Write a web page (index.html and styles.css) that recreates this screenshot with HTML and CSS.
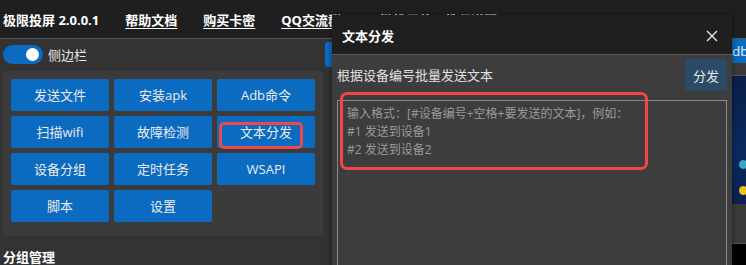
FILE: index.html
```html
<!DOCTYPE html>
<html lang="zh-CN">
<head>
<meta charset="utf-8">
<title>极限投屏</title>
<link rel="stylesheet" href="styles.css">
</head>
<body>
<div class="app">
  <header class="topbar">
    <span class="brand">极限投屏 2.0.0.1</span>
    <a class="nav">帮助文档</a>
    <a class="nav">购买卡密</a>
    <a class="nav">QQ交流群</a>
    <a class="nav">一键投屏使用教程说明</a>
  </header>
  <div class="main">
    <aside class="sidebar">
      <div class="switch-row">
        <span class="switch"><span class="knob"></span></span>
        <span class="switch-label">侧边栏</span>
      </div>
      <div class="panel">
        <div class="grid">
          <button class="btn">发送文件</button>
          <button class="btn">安装apk</button>
          <button class="btn">Adb命令</button>
          <button class="btn">扫描wifi</button>
          <button class="btn">故障检测</button>
          <button class="btn btn-marked">文本分发<span class="mark mark-btn"></span></button>
          <button class="btn">设备分组</button>
          <button class="btn">定时任务</button>
          <button class="btn">WSAPI</button>
          <button class="btn">脚本</button>
          <button class="btn">设置</button>
        </div>
      </div>
      <div class="section-title">分组管理</div>
    </aside>
    <section class="content">
      <div class="tool-btn"></div>
      <div class="device">
        <div class="dev-btn">Adb</div>
        <div class="dev-bar"></div>
        <div class="dev-screen">
          <span class="app-icon teal"></span>
          <span class="app-icon yellow"></span>
        </div>
        <div class="dev-foot"></div>
        <div class="dev-black"></div>
      </div>
    </section>
  </div>

  <div class="modal">
    <div class="modal-head">
      <span class="modal-title">文本分发</span>
      <svg class="close" width="12" height="12" viewBox="0 0 12 12"><path d="M1 1L11 11M11 1L1 11" stroke="#e6e6e6" stroke-width="1.4" fill="none"/></svg>
    </div>
    <div class="modal-body">
      <div class="row">
        <span class="label">根据设备编号批量发送文本</span>
        <button class="send">分发</button>
      </div>
      <textarea class="input" placeholder="输入格式：[#设备编号+空格+要发送的文本]，例如：&#10;#1 发送到设备1&#10;#2 发送到设备2"></textarea>
    </div>
    <span class="mark mark-area"></span>
  </div>
</div>
</body>
</html>
```

FILE: styles.css
```css
* { box-sizing: border-box; }
html, body { margin: 0; padding: 0; }
body {
  width: 746px;
  height: 265px;
  overflow: hidden;
  background: #333333;
  font-family: "Open Sans", "Noto Sans CJK SC", sans-serif;
  font-size: 13px;
  color: #e8e8e8;
}
.app { position: relative; width: 746px; height: 265px; overflow: hidden; }

.topbar {
  height: 39px;
  background: #1f1f1f;
  border-bottom: 1px solid #555555;
  display: flex;
  align-items: center;
  padding: 0 0 0 3px;
  gap: 26px;
  white-space: nowrap;
}
.brand { font-weight: 700; color: #ffffff; font-size: 13px; line-height: 18px; margin-top: 2px; }
.nav { font-weight: 700; color: #ffffff; text-decoration: underline; text-underline-offset: 3px; font-size: 13px; line-height: 18px; margin-top: 2px; }

.main { display: flex; }
.sidebar { width: 325px; flex: none; padding-left: 3px; }
.switch-row { display: flex; align-items: center; gap: 5px; margin-top: 6px; height: 19px; }
.switch {
  width: 40px; height: 19px; border-radius: 10px; background: #0b6bc0;
  display: flex; align-items: center; justify-content: flex-end; padding-right: 4px;
}
.knob { width: 13px; height: 13px; border-radius: 50%; background: #ffffff; }
.switch-label { color: #e6e6e6; font-size: 13px; line-height: 18px; }

.panel {
  margin-top: 7px;
  width: 320px;
  background: #3b3b3b;
  border-radius: 4px;
  padding: 8px 8px 14px 8px;
}
.grid { display: grid; grid-template-columns: repeat(3, 98px); column-gap: 5px; row-gap: 5px; }
.btn {
  position: relative;
  height: 32px;
  border: none;
  border-radius: 2px;
  background: #0b6bc0;
  color: #ececec;
  font-family: "Open Sans", "Noto Sans CJK SC", sans-serif;
  font-size: 13px;
  line-height: 18px;
  padding: 0;
}
.mark { position: absolute; border: 3px solid #ee4848; display: block; }
.mark-btn { left: 2px; top: 6px; width: 84px; height: 27px; border-radius: 5px; }

.section-title { margin-top: 12px; font-weight: 700; color: #ffffff; font-size: 13px; line-height: 18px; }

.content { display: flex; align-items: flex-start; flex: 1; }
.tool-btn { width: 60px; height: 25px; margin-top: 3px; background: #0b6bc0; border-radius: 3px; flex: none; }
.device { margin-left: 315px; width: 120px; flex: none; display: flex; flex-direction: column; }
.dev-btn { height: 24px; background: #0b6bc0; color: #f0f0f0; font-size: 13px; line-height: 24px; padding-left: 24px; }
.dev-bar { height: 13px; background: #3a3a3a; border-top: 5px solid #3a3a3a; border-bottom: 1px solid #555; }
.dev-screen {
  height: 128px;
  background: linear-gradient(180deg, #0a1f4a 0%, #0b2a5e 60%, #0a2250 100%);
  position: relative;
}
.app-icon { position: absolute; left: 39px; width: 9px; height: 9px; border-radius: 50%; }
.teal { top: 84px; background: #3aa6c4; }
.yellow { top: 110px; background: #f0c020; }
.dev-foot { height: 40px; background: #3a3a3a; border-bottom: 1px solid #555; }
.dev-black { height: 40px; background: #000; }

.modal {
  position: absolute;
  left: 332px;
  top: 15px;
  width: 400px;
  height: 262px;
  background: #3d3d3d;
  box-shadow: 0 0 6px rgba(0, 0, 0, 0.45);
}
.modal-head {
  height: 40px;
  background: #1f1f1f;
  border-bottom: 1px solid #5a5a5a;
  display: flex;
  align-items: center;
  justify-content: space-between;
  padding: 2px 14px 0 10px;
}
.modal-title { font-weight: 700; color: #ffffff; font-size: 13px; line-height: 18px; }
.close { display: block; }
.modal-body { padding: 4px 5px 0 5px; }
.row { display: flex; align-items: center; justify-content: space-between; height: 32px; }
.label { color: #e2e2e2; font-size: 13px; line-height: 18px; }
.send {
  width: 42px; height: 32px; border: none; border-radius: 3px;
  background: #2a4a67; color: #e6e6e6;
  font-family: "Open Sans", "Noto Sans CJK SC", sans-serif; font-size: 13px; padding: 0;
}
.input {
  display: block;
  margin-top: 9px;
  width: 390px;
  height: 200px;
  background: #3d3d3d;
  border: 1px solid #8a8a8a;
  border-radius: 0;
  padding: 4px 9px;
  font-family: "Open Sans", "Noto Sans CJK SC", sans-serif;
  font-size: 12px;
  line-height: 18px;
  color: #ddd;
  resize: none;
  outline: none;
}
.input::placeholder { color: #9a9a9a; opacity: 1; }
.mark-area { left: 8px; top: 77px; width: 308px; height: 78px; border-radius: 7px; }
```
